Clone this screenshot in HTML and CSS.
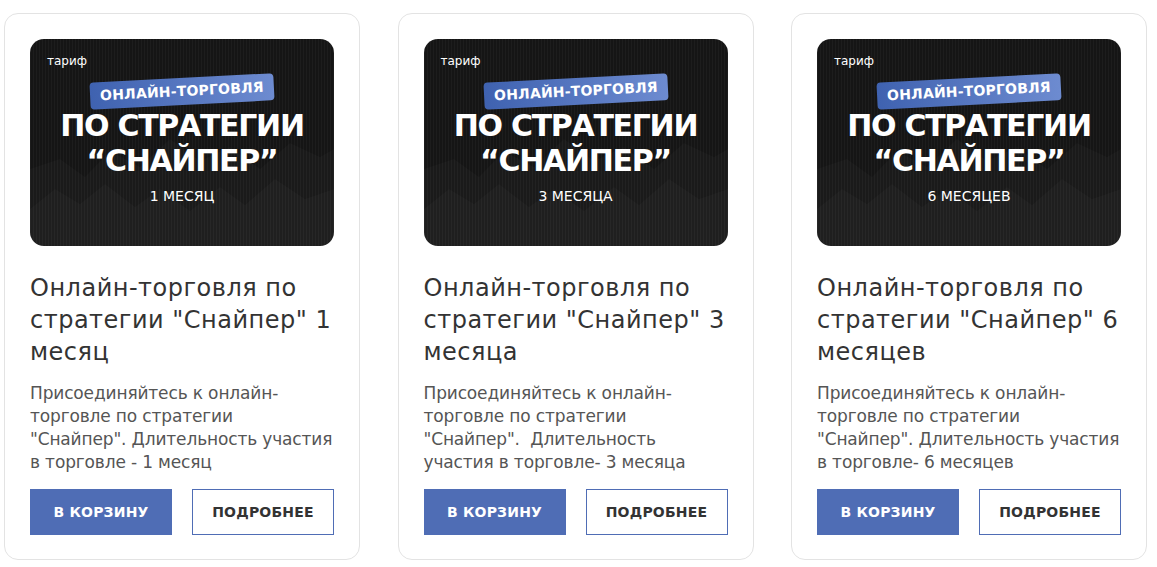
FILE: index.html
```html
<!DOCTYPE html>
<html lang="ru">
<head>
  <meta charset="UTF-8">
  <title>Тарифы — стратегия «Снайпер»</title>
  <link rel="stylesheet" href="styles.css">
</head>
<body>
  <div class="products">

    <div class="card">
      <div class="cover">
        <svg class="cover-chart" viewBox="0 0 304 207" preserveAspectRatio="none">
          <polygon points="0,130 30,120 55,138 80,112 110,128 140,100 170,122 200,108 230,130 260,104 290,118 304,110 304,207 0,207"/>
          <polygon points="0,170 25,150 50,165 75,145 105,168 130,150 160,172 190,148 215,166 245,140 275,160 304,150 304,207 0,207"/>
        </svg>
        <span class="cover-tag">тариф</span>
        <span class="cover-badge">онлайн-торговля</span>
        <span class="cover-title">по стратегии<br>“снайпер”</span>
        <span class="cover-term">1 месяц</span>
      </div>
      <h3 class="card-title">Онлайн-торговля по стратегии "Снайпер" 1 месяц</h3>
      <p class="card-text">Присоединяйтесь к онлайн-торговле по стратегии "Снайпер". Длительность участия в торговле - 1 месяц</p>
      <div class="card-actions">
        <button class="btn btn-cart">В корзину</button>
        <button class="btn btn-more">Подробнее</button>
      </div>
    </div>

    <div class="card">
      <div class="cover">
        <svg class="cover-chart" viewBox="0 0 304 207" preserveAspectRatio="none">
          <polygon points="0,130 30,120 55,138 80,112 110,128 140,100 170,122 200,108 230,130 260,104 290,118 304,110 304,207 0,207"/>
          <polygon points="0,170 25,150 50,165 75,145 105,168 130,150 160,172 190,148 215,166 245,140 275,160 304,150 304,207 0,207"/>
        </svg>
        <span class="cover-tag">тариф</span>
        <span class="cover-badge">онлайн-торговля</span>
        <span class="cover-title">по стратегии<br>“снайпер”</span>
        <span class="cover-term">3 месяца</span>
      </div>
      <h3 class="card-title">Онлайн-торговля по стратегии "Снайпер" 3 месяца</h3>
      <p class="card-text">Присоединяйтесь к онлайн-торговле по стратегии "Снайпер".&nbsp; Длительность участия в торговле- 3 месяца</p>
      <div class="card-actions">
        <button class="btn btn-cart">В корзину</button>
        <button class="btn btn-more">Подробнее</button>
      </div>
    </div>

    <div class="card">
      <div class="cover">
        <svg class="cover-chart" viewBox="0 0 304 207" preserveAspectRatio="none">
          <polygon points="0,130 30,120 55,138 80,112 110,128 140,100 170,122 200,108 230,130 260,104 290,118 304,110 304,207 0,207"/>
          <polygon points="0,170 25,150 50,165 75,145 105,168 130,150 160,172 190,148 215,166 245,140 275,160 304,150 304,207 0,207"/>
        </svg>
        <span class="cover-tag">тариф</span>
        <span class="cover-badge">онлайн-торговля</span>
        <span class="cover-title">по стратегии<br>“снайпер”</span>
        <span class="cover-term">6 месяцев</span>
      </div>
      <h3 class="card-title">Онлайн-торговля по стратегии "Снайпер" 6 месяцев</h3>
      <p class="card-text">Присоединяйтесь к онлайн-торговле по стратегии "Снайпер". Длительность участия в торговле- 6 месяцев</p>
      <div class="card-actions">
        <button class="btn btn-cart">В корзину</button>
        <button class="btn btn-more">Подробнее</button>
      </div>
    </div>

  </div>
</body>
</html>
```

FILE: styles.css
```css
body {
  margin: 0;
  padding: 13px 4px 0;
  background: #fff;
  font-family: "DejaVu Sans", sans-serif;
  color: #333;
}
.products {
  display: flex;
  gap: 37.5px;
}
.card {
  box-sizing: border-box;
  width: 356px;
  height: 547px;
  padding: 25px 25px 24px;
  border: 1px solid #e3e3e3;
  border-radius: 14px;
  display: flex;
  flex-direction: column;
}

/* tariff picture */
.cover {
  position: relative;
  flex: none;
  height: 207px;
  border-radius: 14px;
  overflow: hidden;
  background:
    repeating-linear-gradient(90deg, rgba(255,255,255,0.035) 0 1px, transparent 1px 3px),
    #151515;
  display: flex;
  flex-direction: column;
  align-items: center;
  color: #fff;
  text-transform: uppercase;
}
.cover-chart {
  position: absolute;
  left: 0;
  bottom: 0;
  width: 100%;
  height: 100%;
}
.cover-chart polygon { fill: rgba(255,255,255,0.022); }
.cover > span { position: relative; }
.cover-tag {
  align-self: flex-start;
  margin: 15px 0 0 17px;
  font-size: 12px;
  text-transform: none;
}
.cover-badge {
  margin-top: 10px;
  padding: 5px 10px 6px;
  background: linear-gradient(90deg, #3f62b0, #6d8bd0);
  border-radius: 4px;
  font-size: 14px;
  font-weight: bold;
  letter-spacing: 0.2px;
  transform: rotate(-3deg);
}
.cover-title {
  margin-top: 3px;
  font-size: 30px;
  font-weight: bold;
  letter-spacing: -1.3px;
  line-height: 35px;
  text-align: center;
}
.cover-term {
  margin-top: 10px;
  font-size: 14px;
}

.card-title {
  margin: 26px 0 0;
  font-size: 24px;
  font-weight: normal;
  letter-spacing: 0.5px;
  line-height: 32px;
  color: #333;
}
.card-text {
  margin: 14px 0 0;
  font-size: 17px;
  letter-spacing: -0.15px;
  line-height: 23px;
  color: #555;
}
.card-actions {
  margin-top: auto;
  display: flex;
  gap: 20px;
}
.btn {
  width: 142px;
  height: 46px;
  font-family: inherit;
  font-size: 14px;
  font-weight: bold;
  letter-spacing: 0.2px;
  text-transform: uppercase;
  cursor: pointer;
}
.btn-cart {
  border: none;
  background: #4f6db5;
  color: #fff;
}
.btn-more {
  border: 1px solid #4f6db5;
  background: #fff;
  color: #333;
}
```
